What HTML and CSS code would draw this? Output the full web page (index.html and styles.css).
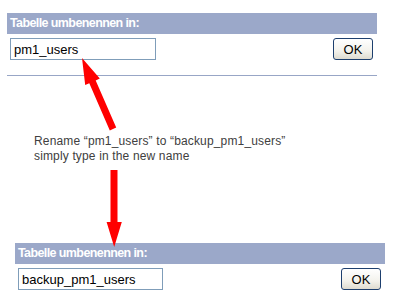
FILE: index.html
```html
<!DOCTYPE html>
<html lang="de">
<head>
  <meta charset="UTF-8" />
  <meta name="viewport" content="width=device-width, initial-scale=1.0" />
  <title>Tabelle umbenennen</title>
  <link rel="stylesheet" href="styles.css">
</head>
<body>
  <div class="page">
    <div class="panel panel-top">
      <div class="panel-head">Tabelle umbenennen in:</div>
      <div class="panel-row">
        <input type="text" class="name-input" value="pm1_users" />
        <button class="ok-btn">OK</button>
      </div>
    </div>

    <div class="divider"></div>

    <p class="note">
      Rename “pm1_users” to “backup_pm1_users”<br>
      simply type in the new name
    </p>

    <div class="panel panel-bottom">
      <div class="panel-head">Tabelle umbenennen in:</div>
      <div class="panel-row">
        <input type="text" class="name-input wide" value="backup_pm1_users" />
        <button class="ok-btn">OK</button>
      </div>
    </div>

    <svg class="arrows" width="410" height="300" viewBox="0 0 410 300">
      <polygon fill="#ff0000" points="82,58 99.8,78.6 95.7,80.4 116.2,127.6 109.8,130.4 89.3,83.2 85.2,85" />
      <polygon fill="#ff0000" points="110.5,170 117.5,170 117.5,222 121.8,222 114.2,247 106.6,222 110.5,222" />
    </svg>
  </div>
</body>
</html>
```

FILE: styles.css
```css
body {
  margin: 0;
  background: #ffffff;
  font-family: "Liberation Sans", Arial, sans-serif;
}
.page {
  position: relative;
  width: 410px;
  height: 300px;
  overflow: hidden;
}
.panel {
  width: 370px;
}
.panel-top {
  padding-top: 13px;
  margin-left: 7px;
}
.panel-bottom {
  margin-left: 15px;
}
.panel-head {
  height: 21px;
  line-height: 21px;
  padding-left: 3px;
  background-color: #9ba8c9;
  color: #ffffff;
  font-size: 12.5px;
  font-weight: bold;
  letter-spacing: -0.6px;
}
.panel-row {
  display: flex;
  justify-content: space-between;
  align-items: flex-start;
  padding: 4px 4px 0 3px;
}
.name-input {
  box-sizing: border-box;
  width: 146px;
  height: 22px;
  margin: 0;
  padding: 0 3px;
  border: 1px solid #7f9db9;
  background: #ffffff;
  color: #000000;
  font-family: "Liberation Sans", Arial, sans-serif;
  font-size: 13px;
  outline: none;
}
.name-input.wide {
  width: 145px;
}
.ok-btn {
  box-sizing: border-box;
  width: 40px;
  height: 22px;
  margin: 0;
  padding: 0;
  border: 1px solid #1d3f6e;
  border-radius: 3px;
  background: linear-gradient(#ffffff, #f3f2ec 60%, #dedbd0);
  color: #000000;
  font-family: "Liberation Sans", Arial, sans-serif;
  font-size: 13px;
}
.divider {
  width: 370px;
  height: 1px;
  margin: 15px 0 0 7px;
  background-color: #98a6c6;
}
.note {
  margin: 58px 0 79px 34px;
  font-size: 12px;
  line-height: 15px;
  letter-spacing: 0.15px;
  color: #404040;
}
.arrows {
  position: absolute;
  left: 0;
  top: 0;
  pointer-events: none;
}
```
